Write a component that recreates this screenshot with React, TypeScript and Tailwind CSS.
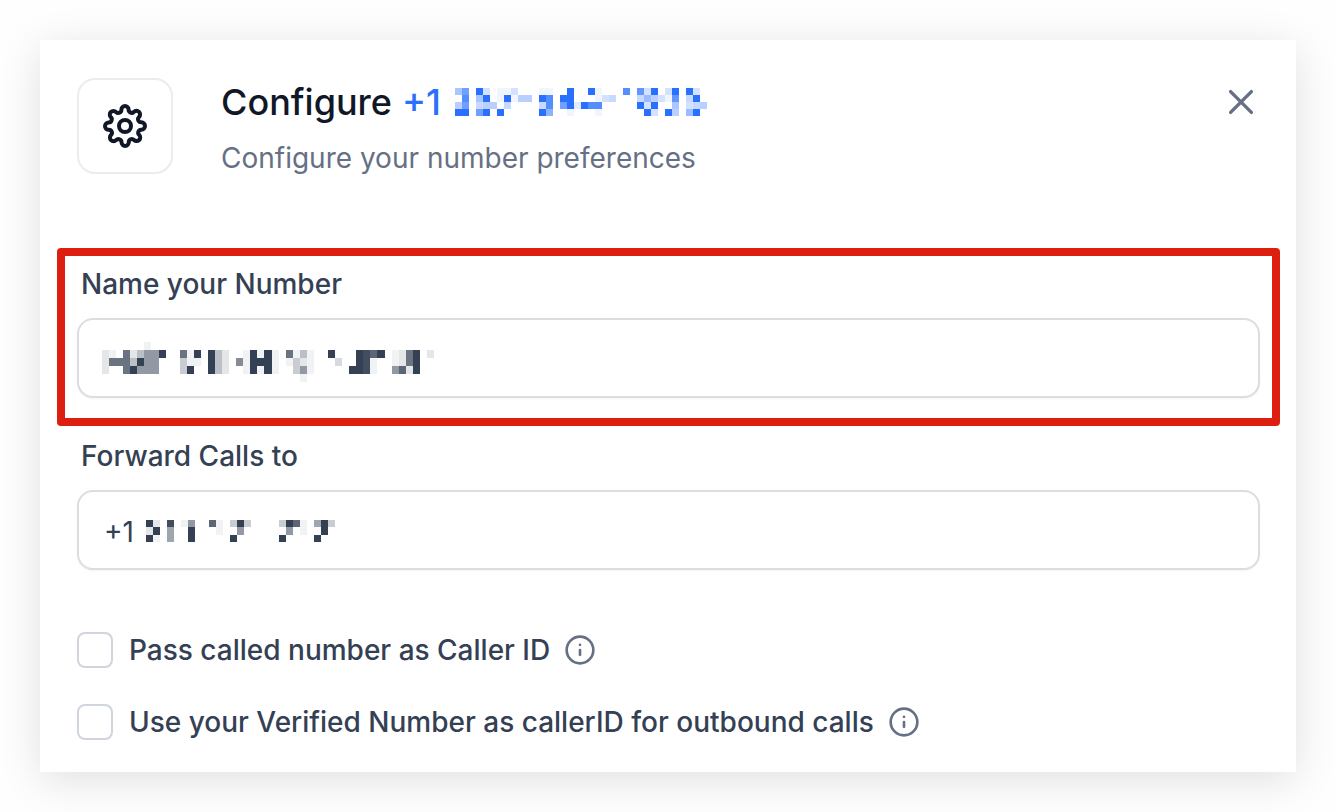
import type { InputHTMLAttributes, ReactNode } from 'react';

// One character per block: a hex digit gives its opacity, a dot is empty.
const titleMask = [
  '6A.F3.113...11..F..F1...C.B3F.3F.F3.',
  '.C.6F.1F155.FC.FF...134...47531B.4F.',
  '5A.455.4....4C.AF2FCC.....F3F..6.345',
  'FF.AF.F.....F8..1...1......F3.F5.7F.',
];

const nameMask = [
  '......1........................................',
  '21.B2588F..B1F.F52..1F1F1.B151..F...FECF.12BF.2',
  '2BBB5F88...411.F52.91FFF1.1421...3..FE1..12BF..',
  '2..BF888...4F..F52..1F1F1..481.....FFE1..8C2F..',
  '............................1..................',
];

const forwardMask = [
  'F2.E.18..C1.4F4....4FC1.7F4',
  '2F.7..F...1..8......8.1..F.',
  'F1.7..F.....F......F....F..',
];

const numberPreferences = [
  { id: 'pass-caller-id', label: 'Pass called number as Caller ID' },
  { id: 'verified-number', label: 'Use your Verified Number as callerID for outbound calls' },
];

function Mask({ rows, className }: { rows: string[]; className: string }) {
  return (
    <svg
      viewBox={`0 0 ${rows[0].length} ${rows.length}`}
      preserveAspectRatio="none"
      shapeRendering="crispEdges"
      fill="currentColor"
      aria-hidden="true"
      className={className}
    >
      {rows.map((row, y) =>
        row.split('').map((level, x) =>
          level === '.' ? null : (
            <rect key={`${x}-${y}`} x={x} y={y} width={1} height={1} opacity={parseInt(level, 16) / 15} />
          )
        )
      )}
    </svg>
  );
}

function SettingsIcon() {
  return (
    <svg
      viewBox="-1.2 -1.2 26.4 26.4"
      fill="none"
      stroke="currentColor"
      strokeWidth="2.2"
      strokeLinecap="round"
      strokeLinejoin="round"
      className="size-12"
    >
      <circle cx="12" cy="12" r="3.3" />
      <path d="M19.4 15a1.65 1.65 0 0 0 .33 1.82l.06.06a2 2 0 0 1 0 2.83 2 2 0 0 1-2.83 0l-.06-.06a1.65 1.65 0 0 0-1.82-.33 1.65 1.65 0 0 0-1 1.51V21a2 2 0 0 1-2 2 2 2 0 0 1-2-2v-.09A1.65 1.65 0 0 0 9 19.4a1.65 1.65 0 0 0-1.82.33l-.06.06a2 2 0 0 1-2.83 0 2 2 0 0 1 0-2.83l.06-.06a1.65 1.65 0 0 0 .33-1.82 1.65 1.65 0 0 0-1.51-1H3a2 2 0 0 1-2-2 2 2 0 0 1 2-2h.09A1.65 1.65 0 0 0 4.6 9a1.65 1.65 0 0 0-.33-1.82l-.06-.06a2 2 0 0 1 0-2.83 2 2 0 0 1 2.83 0l.06.06a1.65 1.65 0 0 0 1.82.33H9a1.65 1.65 0 0 0 1-1.51V3a2 2 0 0 1 2-2 2 2 0 0 1 2 2v.09a1.65 1.65 0 0 0 1 1.51 1.65 1.65 0 0 0 1.82-.33l.06-.06a2 2 0 0 1 2.83 0 2 2 0 0 1 0 2.83l-.06.06a1.65 1.65 0 0 0-.33 1.82V9a1.65 1.65 0 0 0 1.51 1H21a2 2 0 0 1 2 2 2 2 0 0 1-2 2h-.09a1.65 1.65 0 0 0-1.51 1z" />
    </svg>
  );
}

function CloseIcon() {
  return (
    <svg
      viewBox="0 0 24 24"
      fill="none"
      stroke="currentColor"
      strokeWidth="1.7"
      strokeLinecap="round"
      className="size-12"
    >
      <path d="M17.2 6.8 6.8 17.2M6.8 6.8l10.4 10.4" />
    </svg>
  );
}

function InfoIcon() {
  return (
    <svg
      viewBox="0 0 16 16"
      fill="none"
      stroke="currentColor"
      strokeWidth="1.33"
      strokeLinecap="round"
      className="size-8"
    >
      <circle cx="8" cy="8" r="6.67" />
      <path d="M8 10.4V8M8 5.4h.007" />
    </svg>
  );
}

type FieldProps = InputHTMLAttributes<HTMLInputElement> & {
  id: string;
  label: string;
  children: ReactNode;
};

function Field({ id, label, children, ...props }: FieldProps) {
  return (
    <div>
      <label htmlFor={id} className="block pl-1 mb-3.5 text-[28px] leading-10 font-medium">
        {label}
      </label>
      <div className="relative">
        <input
          id={id}
          type="text"
          className="block w-full h-20 px-[25px] pt-1 rounded-2xl border-2 border-[#dcdde1] bg-white text-[28px] shadow-xs outline-none"
          {...props}
        />
        {children}
      </div>
    </div>
  );
}

export default function App() {
  return (
    <main className="p-10 bg-[#fefefe] font-['Inter',sans-serif] text-[#344054]">
      <section
        aria-labelledby="configure-title"
        className="pt-[38px] pb-8 pl-[17px] pr-4 bg-white shadow-[0_8px_40px_rgba(0,0,0,0.12)]"
      >
        <header className="flex items-start pl-5 pr-[15px] mb-[70px]">
          <div className="flex shrink-0 items-center justify-center size-24 rounded-[18px] border-2 border-[#eaecf0] text-[#101828]">
            <SettingsIcon />
          </div>
          <div className="flex-1 pl-12">
            <h1 id="configure-title" className="flex items-center gap-2.5 text-4xl leading-12 font-medium text-[#101828]">
              Configure
              <span className="flex items-center gap-3.5 text-[#2970ff]">
                +1
                <Mask rows={titleMask} className="w-[252px] h-7" />
              </span>
            </h1>
            <p className="mt-3 text-[28px] leading-10 text-[#667085]">Configure your number preferences</p>
          </div>
          <button type="button" aria-label="Close" className="text-[#667085] cursor-pointer">
            <CloseIcon />
          </button>
        </header>

        <div className="pt-2 pb-5 px-3 rounded-[4px] border-8 border-[#dc1f0e]">
          <Field id="number-name" label="Name your Number">
            <Mask rows={nameMask} className="absolute left-[25px] top-6 w-[332px] h-10" />
          </Field>
        </div>

        <div className="pt-2.5 px-5">
          <Field id="forward-to" label="Forward Calls to" defaultValue="+1">
            <Mask rows={forwardMask} className="absolute left-[69px] top-[30px] w-[189px] h-[22px]" />
          </Field>

          <div className="flex flex-col gap-9 mt-[62px]">
            {numberPreferences.map(({ id, label }) => (
              <div key={id} className="flex items-center h-9">
                <input
                  id={id}
                  type="checkbox"
                  className="appearance-none shrink-0 size-9 rounded-lg border-2 border-[#d0d5dd] bg-white checked:bg-[#2970ff]"
                />
                <label htmlFor={id} className="pl-4 text-[28px] leading-9 font-medium">
                  {label}
                </label>
                <button type="button" aria-label={`About: ${label}`} className="ml-3.5 text-[#667085] cursor-pointer">
                  <InfoIcon />
                </button>
              </div>
            ))}
          </div>
        </div>
      </section>
    </main>
  );
}
